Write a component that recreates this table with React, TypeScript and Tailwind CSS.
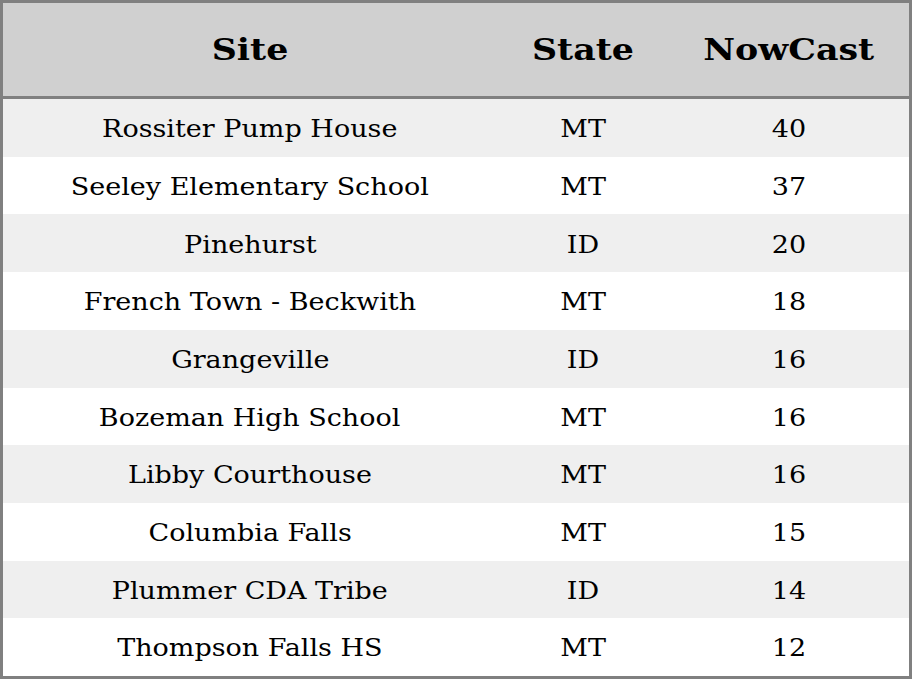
import React from 'react';

const rows: [string, string, number][] = [
    ['Rossiter Pump House', 'MT', 40],
    ['Seeley Elementary School', 'MT', 37],
    ['Pinehurst', 'ID', 20],
    ['French Town - Beckwith', 'MT', 18],
    ['Grangeville', 'ID', 16],
    ['Bozeman High School', 'MT', 16],
    ['Libby Courthouse', 'MT', 16],
    ['Columbia Falls', 'MT', 15],
    ['Plummer CDA Tribe', 'ID', 14],
    ['Thompson Falls HS', 'MT', 12],
];

const Head: React.FC<{ children: React.ReactNode }> = ({ children }) => (
    <span className="inline-block scale-x-[1.16] whitespace-nowrap">{children}</span>
);

const Cell: React.FC<{ children: React.ReactNode }> = ({ children }) => (
    <span className="inline-block scale-x-[1.08] whitespace-nowrap pt-[2px]">{children}</span>
);

const App: React.FC = () => {
    return (
        <div className="w-[912px] h-[679px] bg-white" style={{ fontFamily: '"DejaVu Serif", serif' }}>
            <div className="w-[912px] h-[679px] border-[3px] border-[#808080] flex flex-col text-black">
                <div className="flex h-[96px] shrink-0 bg-[#d0d0d0] border-b-[3px] border-[#808080] font-bold text-[30px]">
                    <div className="w-[494px] flex items-center justify-center"><Head>Site</Head></div>
                    <div className="w-[172px] flex items-center justify-center"><Head>State</Head></div>
                    <div className="flex-1 flex items-center justify-center"><Head>NowCast</Head></div>
                </div>
                {rows.map(([site, state, val], i) => (
                    <div key={site} className={`flex flex-1 text-[25px] ${i % 2 === 0 ? 'bg-[#efefef]' : 'bg-white'}`}>
                        <div className="w-[494px] flex items-center justify-center"><Cell>{site}</Cell></div>
                        <div className="w-[172px] flex items-center justify-center"><Cell>{state}</Cell></div>
                        <div className="flex-1 flex items-center justify-center"><Cell>{val}</Cell></div>
                    </div>
                ))}
            </div>
        </div>
    );
};

export default App;
